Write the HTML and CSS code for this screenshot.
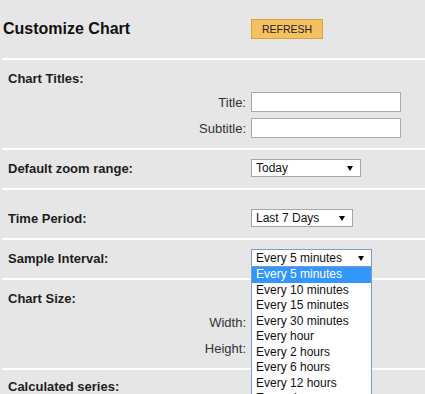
FILE: index.html
```html
<!DOCTYPE html>
<html>
<head>
<meta charset="utf-8">
<link rel="stylesheet" href="styles.css">
</head>
<body>
<div class="page">
  <div class="header">
    <h1 class="title">Customize Chart</h1>
    <button class="refresh">REFRESH</button>
  </div>
  <div class="sep"></div>

  <div class="section tall">
    <div class="label full">Chart Titles:</div>
    <div class="field-label">Title:</div>
    <div class="input wide"></div>
    <div class="field-label">Subtitle:</div>
    <div class="input wide"></div>
  </div>
  <div class="sep"></div>

  <div class="section">
    <div class="label">Default zoom range:</div>
    <div class="select w110"><span>Today</span><svg class="arrow" width="6" height="5" viewBox="0 0 6 5"><polygon points="0,0 6,0 3,5" fill="#000"/></svg></div>
  </div>
  <div class="sep"></div>

  <div class="section period">
    <div class="label">Time Period:</div>
    <div class="select w102"><span>Last 7 Days</span><svg class="arrow" width="6" height="5" viewBox="0 0 6 5"><polygon points="0,0 6,0 3,5" fill="#000"/></svg></div>
  </div>
  <div class="sep"></div>

  <div class="section">
    <div class="label">Sample Interval:</div>
    <div class="select w121 open"><span>Every 5 minutes</span><svg class="arrow" width="6" height="5" viewBox="0 0 6 5"><polygon points="0,0 6,0 3,5" fill="#000"/></svg>
      <ul class="dropdown">
        <li class="active">Every 5 minutes</li>
        <li>Every 10 minutes</li>
        <li>Every 15 minutes</li>
        <li>Every 30 minutes</li>
        <li>Every hour</li>
        <li>Every 2 hours</li>
        <li>Every 6 hours</li>
        <li>Every 12 hours</li>
        <li>Every day</li>
        <li>Every week</li>
      </ul>
    </div>
  </div>
  <div class="sep"></div>

  <div class="section tall">
    <div class="label full">Chart Size:</div>
    <div class="field-label">Width:</div>
    <div class="input small"></div>
    <div class="field-label">Height:</div>
    <div class="input small"></div>
  </div>
  <div class="sep"></div>

  <div class="section">
    <div class="label">Calculated series:</div>
  </div>
</div>
</body>
</html>
```

FILE: styles.css
```css
html, body {
  margin: 0;
  padding: 0;
  overflow: hidden;
  background: #e6e6e6;
}
body {
  font-family: "Liberation Sans", Arial, sans-serif;
  color: #222;
}
.page {
  width: 425px;
}
.header {
  height: 58px;
  display: grid;
  grid-template-columns: 248px auto;
  align-items: center;
  padding-left: 3px;
}
.title {
  margin: 0;
  font-size: 16px;
  font-weight: bold;
  color: #111;
  line-height: 18px;
}
.refresh {
  justify-self: start;
  width: 72px;
  height: 20px;
  margin: 0;
  padding: 0;
  background: #f4c160;
  border: 1px solid #d6a143;
  font-family: "Liberation Sans", Arial, sans-serif;
  font-size: 10.5px;
  color: #222;
  line-height: 18px;
}
.sep {
  height: 2px;
  margin-left: 2px;
  background: #ffffff;
}
.section {
  display: grid;
  grid-template-columns: 238px auto;
  column-gap: 5px;
  row-gap: 6px;
  align-items: center;
  padding: 9px 0 11px 8px;
}
.section.tall {
  padding: 11px 0 10px 8px;
}
.section.period {
  padding: 19px 0 11px 8px;
}
.label {
  font-size: 13px;
  font-weight: bold;
  line-height: 15px;
  color: #1d1d1d;
}
.label.full {
  grid-column: 1 / 3;
}
.field-label {
  font-size: 13px;
  line-height: 15px;
  text-align: right;
  color: #333;
}
.input {
  box-sizing: border-box;
  height: 20px;
  background: #fff;
  border: 1px solid #a9a9a9;
}
.input.wide {
  width: 150px;
}
.input.small {
  width: 60px;
}
.select {
  position: relative;
  box-sizing: border-box;
  height: 18px;
  background: #fff;
  border: 1px solid #a6a6a6;
  display: flex;
  align-items: center;
  justify-content: space-between;
  padding: 0 7px 0 4px;
  font-size: 12px;
  color: #111;
}
.select.w110 { width: 110px; }
.select.w102 { width: 102px; }
.select.w121 { width: 121px; }
.select.open {
  border-color: #7b9ccf;
}
.arrow {
  display: block;
  flex: none;
}
.dropdown {
  position: absolute;
  top: 16px;
  left: -1px;
  width: 121px;
  box-sizing: border-box;
  margin: 0;
  padding: 0;
  list-style: none;
  background: #fff;
  border: 1px solid #7b9ccf;
  z-index: 5;
}
.dropdown li {
  height: 15.5px;
  line-height: 15.5px;
  padding-left: 4px;
  font-size: 12px;
  color: #111;
  white-space: nowrap;
}
.dropdown li.active {
  background: #3296fb;
  color: #fff;
}
```
